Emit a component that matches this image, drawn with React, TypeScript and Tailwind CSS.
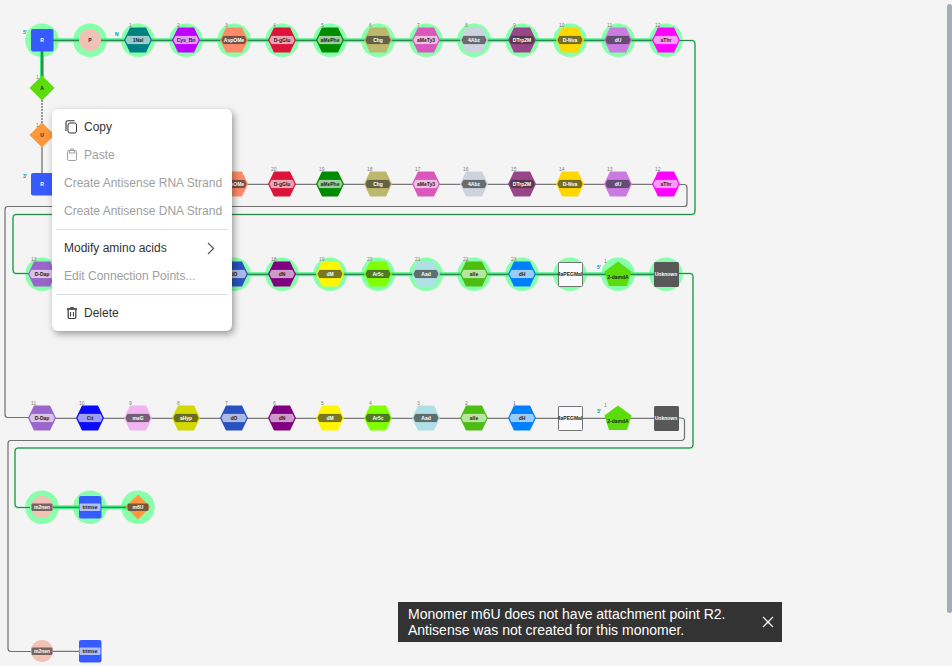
import type { ReactNode } from "react";

type Shape = "hex" | "square" | "box" | "circle" | "diamond" | "pentagon" | "unknown";
type Pill = "light" | "dark" | "none";

interface Monomer {
  col: number;
  label: string;
  shape: Shape;
  fill: string;
  pill: Pill;
  ink?: string;
  index?: string;
}

interface Chain {
  y: number;
  selected: boolean;
  from: number;
  to: number;
  items: Monomer[];
}

const columnX = (col: number) => 42 + col * 48;

const hex = (col: number, label: string, fill: string, pill: Pill, index: string): Monomer => ({
  col,
  label,
  shape: "hex",
  fill,
  pill,
  index,
});

const BLUE = "#365cff";
const PEACH = "#f2c1b5";
const GREEN = "#5add0a";
const ORANGE = "#ff973c";

const chains: Chain[] = [
  {
    y: 40,
    selected: true,
    from: 42,
    to: 666,
    items: [
      { col: 0, label: "R", shape: "square", fill: BLUE, pill: "none", ink: "#fff" },
      { col: 1, label: "P", shape: "circle", fill: PEACH, pill: "none" },
      hex(2, "1Nal", "#008080", "light", "1"),
      hex(3, "Cys_Bn", "#bf00ff", "light", "2"),
      hex(4, "AspOMe", "#ff8c69", "dark", "3"),
      hex(5, "D-gGlu", "#dc143c", "light", "4"),
      hex(6, "aMePhe", "#008b00", "light", "5"),
      hex(7, "Chg", "#bdb76b", "dark", "6"),
      hex(8, "aMeTy3", "#da58bb", "light", "7"),
      hex(9, "4Abz", "#ccd3de", "dark", "8"),
      hex(10, "DTrp2M", "#99458a", "dark", "9"),
      hex(11, "D-Nva", "#ffd700", "dark", "10"),
      hex(12, "dU", "#ca7ae1", "dark", "11"),
      hex(13, "aThr", "#ff00ff", "light", "12"),
    ],
  },
  {
    y: 184,
    selected: false,
    from: 234,
    to: 666,
    items: [
      { col: 0, label: "R", shape: "square", fill: BLUE, pill: "none", ink: "#fff" },
      hex(4, "AspOMe", "#ff8c69", "dark", ""),
      hex(5, "D-gGlu", "#dc143c", "light", "20"),
      hex(6, "aMePhe", "#008b00", "light", "19"),
      hex(7, "Chg", "#bdb76b", "dark", "18"),
      hex(8, "aMeTy3", "#da58bb", "light", "17"),
      hex(9, "4Abz", "#ccd3de", "dark", "16"),
      hex(10, "DTrp2M", "#99458a", "dark", "15"),
      hex(11, "D-Nva", "#ffd700", "dark", "14"),
      hex(12, "dU", "#ca7ae1", "dark", "13"),
      hex(13, "aThr", "#ff00ff", "light", "12"),
    ],
  },
  {
    y: 274,
    selected: true,
    from: 42,
    to: 666,
    items: [
      hex(0, "D-Dap", "#9966cc", "light", "13"),
      hex(4, "dO", "#2a52be", "light", ""),
      hex(5, "dN", "#800080", "light", "18"),
      hex(6, "dM", "#fff600", "dark", "19"),
      hex(7, "Ar5c", "#80ff00", "dark", "20"),
      hex(8, "Aad", "#b0e0e6", "dark", "21"),
      hex(9, "aIle", "#4dbd14", "light", "22"),
      hex(10, "dH", "#007fff", "light", "23"),
      { col: 11, label: "4aPEGMal", shape: "box", fill: "#fafafc", pill: "none" },
      { col: 12, label: "2-damdA", shape: "pentagon", fill: GREEN, pill: "none", index: "1" },
      { col: 13, label: "Unknown", shape: "unknown", fill: "#585858", pill: "none", ink: "#fff" },
    ],
  },
  {
    y: 418,
    selected: false,
    from: 42,
    to: 666,
    items: [
      hex(0, "D-Dap", "#9966cc", "light", "11"),
      hex(1, "Cit", "#0a0aff", "light", "10"),
      hex(2, "meG", "#f0b4f0", "dark", "9"),
      hex(3, "aHyp", "#d2d900", "dark", "8"),
      hex(4, "dO", "#2a52be", "light", "7"),
      hex(5, "dN", "#800080", "light", "6"),
      hex(6, "dM", "#fff600", "dark", "5"),
      hex(7, "Ar5c", "#80ff00", "dark", "4"),
      hex(8, "Aad", "#b0e0e6", "dark", "3"),
      hex(9, "aIle", "#4dbd14", "light", "2"),
      hex(10, "dH", "#007fff", "light", "1"),
      { col: 11, label: "4aPEGMal", shape: "box", fill: "#fafafc", pill: "none" },
      { col: 12, label: "2-damdA", shape: "pentagon", fill: GREEN, pill: "none", index: "1" },
      { col: 13, label: "Unknown", shape: "unknown", fill: "#585858", pill: "none", ink: "#fff" },
    ],
  },
  {
    y: 507,
    selected: true,
    from: 42,
    to: 138,
    items: [
      { col: 0, label: "m2nen", shape: "circle", fill: PEACH, pill: "dark" },
      { col: 1, label: "trimse", shape: "square", fill: BLUE, pill: "light" },
      { col: 2, label: "m6U", shape: "diamond", fill: ORANGE, pill: "dark" },
    ],
  },
  {
    y: 651,
    selected: false,
    from: 42,
    to: 90,
    items: [
      { col: 0, label: "m2nen", shape: "circle", fill: PEACH, pill: "dark" },
      { col: 1, label: "trimse", shape: "square", fill: BLUE, pill: "light" },
    ],
  },
];

const senseTurns = [
  "M678 40.5H692Q695 40.5 695 43.5V211Q695 214.5 692 214.5H16Q13 214.5 13 217.5V270Q13 273.5 16 273.5H30",
  "M678 273.5H690Q693 273.5 693 276.5V445Q693 448 690 448H18Q15 448 15 451V504Q15 507.5 18 507.5H30",
];

const antisenseTurns = [
  "M678 184.5H684Q687 184.5 687 187.5V203.5Q687 206.5 684 206.5H8Q5 206.5 5 209.5V414.5Q5 417.5 8 417.5H30",
  "M678 418H681Q684.5 418 684.5 421V437Q684.5 440.5 681 440.5H11Q8 440.5 8 443.5V648.5Q8 651.5 11 651.5H32",
];

function Outline({ shape, fill }: { shape: Shape; fill: string }) {
  switch (shape) {
    case "hex":
      return <path d="M-14 0L-8 -12.5H8L14 0L8 12.5H-8Z" fill={fill} />;
    case "square":
      return <rect x={-11} y={-11} width={22.5} height={22.5} rx={2} fill={fill} />;
    case "unknown":
      return <rect x={-12} y={-12} width={25} height={25} rx={1.5} fill={fill} />;
    case "box":
      return <rect x={-11.5} y={-11.5} width={24} height={24} rx={1} fill={fill} stroke="#6f7572" />;
    case "circle":
      return <circle r={11} fill={fill} />;
    case "diamond":
      return <path d="M0 -12.5L12.5 0L0 12.5L-12.5 0Z" fill={fill} />;
    case "pentagon":
      return <path d="M0 -12.5L13.5 -2.5L9 12H-9L-13.5 -2.5Z" fill={fill} />;
  }
}

function PillBackdrop({ shape, pill }: { shape: Shape; pill: Pill }) {
  const fill = pill === "light" ? "#fff" : "#333";
  const opacity = pill === "light" ? 0.6 : 0.65;
  if (shape === "hex") {
    return <path d="M-12.5 0L-10.5 -4H10.5L12.5 0L10.5 4H-10.5Z" fill={fill} fillOpacity={opacity} stroke={fill} strokeOpacity={0.2} strokeLinejoin="round" strokeWidth={0.6} />;
  }
  return <rect x={-10.5} y={-3.5} width={21} height={7.5} rx={1} fill={fill} fillOpacity={opacity} />;
}

function MonomerNode({ item, y }: { item: Monomer; y: number }) {
  const pentagon = item.shape === "pentagon";
  const ink = item.ink ?? (item.pill === "dark" ? "#fff" : "#222");
  const indexX = pentagon ? -14 : item.index && item.index.length > 1 ? -11 : -9;
  return (
    <g transform={`translate(${columnX(item.col)} ${y})`}>
      <Outline shape={item.shape} fill={item.fill} />
      {item.pill !== "none" && <PillBackdrop shape={item.shape} pill={item.pill} />}
      <text y={pentagon ? 5 : 2} fontSize={5} fontWeight={700} textAnchor="middle" fill={ink}>
        {item.label}
      </text>
      {item.index && (
        <text x={indexX} y={pentagon ? -11 : -13} fontSize={5} fill="#808080">
          {item.index}
        </text>
      )}
    </g>
  );
}

function Terminus({ x, y, children }: { x: number; y: number; children: ReactNode }) {
  return (
    <text x={x} y={y} fontSize={5} fontWeight={700} fill="#0097a8">
      {children}
    </text>
  );
}

function SequenceCanvas() {
  return (
    <svg className="h-full min-w-0 flex-1" aria-label="Sequence canvas">
      {chains
        .filter((chain) => chain.selected)
        .flatMap((chain) =>
          Array.from({ length: (chain.to - chain.from) / 48 + 1 }, (_, i) => (
            <circle key={`${chain.y}-${i}`} cx={chain.from + i * 48} cy={chain.y + 0.3} r={16.8} fill="#88ffaa" />
          )),
        )}

      <g fill="none">
        {senseTurns.map((d) => (
          <g key={d}>
            <path d={d} stroke="#9ae6b4" strokeWidth={2} />
            <path d={d} stroke="#268848" />
          </g>
        ))}
        {antisenseTurns.map((d) => (
          <path key={d} d={d} stroke="#707070" strokeWidth={1.2} />
        ))}
        {chains.map((chain) =>
          chain.selected ? (
            <g key={chain.y}>
              <path d={`M${chain.from} ${chain.y + 0.3}H${chain.to}`} stroke="#4af58a" strokeWidth={4} />
              <path d={`M${chain.from} ${chain.y + 0.3}H${chain.to}`} stroke="#2f8750" strokeWidth={1.2} />
            </g>
          ) : (
            <path key={chain.y} d={`M${chain.from} ${chain.y + 0.3}H${chain.to}`} stroke="#777" strokeWidth={1.3} />
          ),
        )}
        <path d="M42 50V77" stroke="#30ed77" strokeWidth={4} />
        <path d="M42 50V77" stroke="#3a8b58" strokeWidth={2} />
        <path d="M42 100V124" stroke="#999" strokeWidth={2} strokeDasharray="2 1" />
        <path d="M42 147V174" stroke="#a0a0a0" strokeWidth={2} />
      </g>

      {chains.map((chain) => (
        <g key={chain.y}>
          {chain.items.map((item) => (
            <MonomerNode key={item.col} item={item} y={chain.y} />
          ))}
        </g>
      ))}

      <MonomerNode item={{ col: 0, label: "A", shape: "diamond", fill: GREEN, pill: "none" }} y={88} />
      <MonomerNode item={{ col: 0, label: "U", shape: "diamond", fill: ORANGE, pill: "none" }} y={135} />
      <text x={36} y={79} fontSize={5} fill="#888">1</text>
      <text x={36} y={127} fontSize={5} fill="#888">1</text>

      <Terminus x={23} y={34}>5'</Terminus>
      <Terminus x={115} y={36}>N</Terminus>
      <Terminus x={23} y={178}>3'</Terminus>
      <Terminus x={597} y={269}>5'</Terminus>
      <Terminus x={597} y={413}>3'</Terminus>
    </svg>
  );
}

function CopyIcon() {
  return (
    <svg className="h-4 w-4" viewBox="0 0 16 16" fill="none" stroke="currentColor" aria-hidden="true">
      <rect x={4} y={4} width={8.5} height={10} rx={2} />
      <path d="M2 12V3.5Q2 1.8 3.7 1.8H10.5" strokeWidth={1.1} />
    </svg>
  );
}

function PasteIcon() {
  return (
    <svg className="h-4 w-4" viewBox="0 0 16 16" fill="none" stroke="currentColor" aria-hidden="true">
      <rect x={3.5} y={3.5} width={9} height={10} rx={1.3} />
      <path d="M5.5 3V6H10.5V3" strokeWidth={1.2} />
      <path d="M6.5 3V2H9.5V3" />
    </svg>
  );
}

function TrashIcon() {
  return (
    <svg className="h-4 w-4" viewBox="0 0 16 16" fill="none" stroke="currentColor" aria-hidden="true">
      <path d="M3 4H13" strokeWidth={1.6} />
      <path d="M6 2.7H10" />
      <path d="M4.2 5V12.3Q4.2 13.5 5.4 13.5H10.6Q11.8 13.5 11.8 12.3V5" strokeWidth={1.2} />
      <path d="M6.6 7V11.5M9.4 7V11.5" />
    </svg>
  );
}

function MenuItem({ icon, submenu, disabled, children }: { icon?: ReactNode; submenu?: boolean; disabled?: boolean; children: ReactNode }) {
  return (
    <button
      type="button"
      role="menuitem"
      disabled={disabled}
      className="flex h-7 w-full items-center gap-1 px-2 text-left text-xs whitespace-nowrap text-[#333] disabled:text-[#a0a0a0]"
    >
      {icon}
      <span className="flex-1">{children}</span>
      {submenu && (
        <svg className="h-4 w-4 text-[#585c66]" viewBox="0 0 16 16" fill="none" stroke="currentColor" strokeWidth={1.3} aria-hidden="true">
          <path d="M4 3L9.5 8.5L4 14" />
        </svg>
      )}
    </button>
  );
}

function ContextMenu() {
  return (
    <div
      role="menu"
      className="absolute top-[109px] left-[52px] w-[180px] rounded-md bg-white p-1 shadow-[2px_3px_7px_rgba(0,0,0,0.38)]"
    >
      <MenuItem icon={<CopyIcon />}>Copy</MenuItem>
      <MenuItem icon={<PasteIcon />} disabled>Paste</MenuItem>
      <MenuItem disabled>Create Antisense RNA Strand</MenuItem>
      <MenuItem disabled>Create Antisense DNA Strand</MenuItem>
      <hr className="my-1 border-[#dcdee6]" />
      <MenuItem submenu>Modify amino acids</MenuItem>
      <MenuItem disabled>Edit Connection Points...</MenuItem>
      <hr className="my-1 border-[#dcdee6]" />
      <MenuItem icon={<TrashIcon />}>Delete</MenuItem>
    </div>
  );
}

function Toast() {
  return (
    <div role="status" className="absolute right-[170px] bottom-6 flex w-96 items-center justify-between bg-[#333] py-1 pr-2 pl-2.5 text-white">
      <p className="text-sm leading-4">
        Monomer m6U does not have attachment point R2.
        <br />
        Antisense was not created for this monomer.
      </p>
      <button type="button" aria-label="Close" className="flex h-3 w-3 items-center justify-center">
        <svg className="h-3 w-3" viewBox="0 0 12 12" fill="none" stroke="currentColor" strokeWidth={1.3} aria-hidden="true">
          <path d="M1 1L11 11M11 1L1 11" />
        </svg>
      </button>
    </div>
  );
}

export default function App() {
  return (
    <main className="relative flex h-screen overflow-hidden bg-[#f4f4f4] font-[Helvetica,'Liberation_Sans',Arial,sans-serif]">
      <SequenceCanvas />
      <div className="h-full w-[5px] shrink-0 pt-1">
        <div className="h-[92%] rounded-sm bg-[#a3aebb]" />
      </div>
      <ContextMenu />
      <Toast />
    </main>
  );
}
